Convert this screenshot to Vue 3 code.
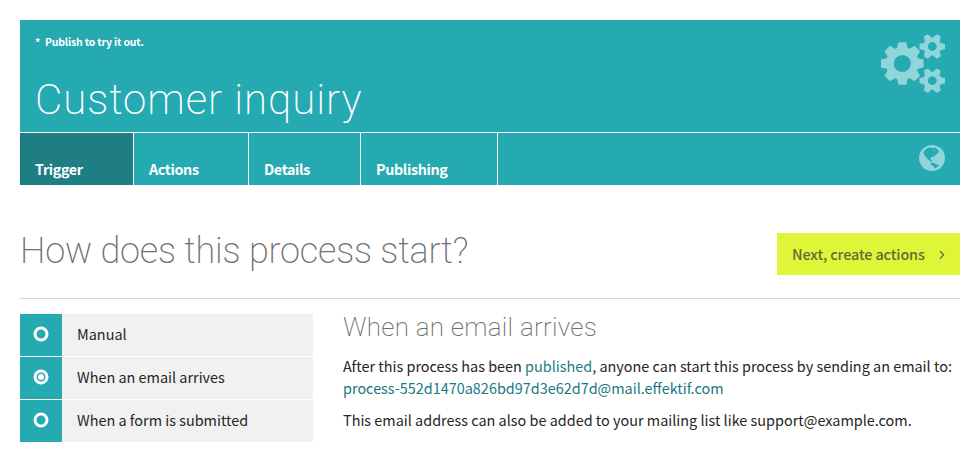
<script setup>
import { ref } from 'vue'

const tabs = [
  { label: 'Trigger', cls: 'trigger' },
  { label: 'Actions', cls: 'actions' },
  { label: 'Details', cls: 'details' },
  { label: 'Publishing', cls: 'publishing' },
]
const activeTab = ref('Trigger')
const options = ['Manual', 'When an email arrives', 'When a form is submitted']
const selected = ref('When an email arrives')

// Outline of a gear with evenly spaced, slightly tapered teeth and a round hole.
function gear(cx, cy, outer, body, hole, teeth, tip, base, start) {
  const points = []
  for (let i = 0; i < teeth; i++) {
    const a = start + (i * 2 * Math.PI) / teeth
    const corners = [[body, -base], [outer, -tip], [outer, tip], [body, base]]
    for (const [r, w] of corners) {
      const x = cx + r * Math.cos(a) - w * Math.sin(a)
      const y = cy + r * Math.sin(a) + w * Math.cos(a)
      points.push(`${x.toFixed(2)} ${y.toFixed(2)}`)
    }
  }
  return `M${points.join('L')}Z M${cx - hole} ${cy}a${hole} ${hole} 0 1 0 ${2 * hole} 0a${hole} ${hole} 0 1 0 ${-2 * hole} 0Z`
}
const gears = [
  gear(21.3, 29.5, 21.3, 15.6, 8.6, 8, 3.9, 5.3, 0),
  gear(51.3, 12.5, 12.8, 8.3, 4.4, 6, 2.4, 3.7, 0),
  gear(51.3, 46.7, 12.8, 8.3, 4.4, 6, 2.4, 3.7, 0),
]
</script>

<template>
  <main class="page">
    <header class="banner">
      <div class="intro">
        <div>
          <p class="note"><span class="star">*</span>Publish to try it out.</p>
          <h1><span>Customer inquiry</span></h1>
        </div>
        <svg class="gears" width="64" height="60" viewBox="0 0 64 60">
          <path v-for="d in gears" :key="d" :d="d" fill-rule="evenodd" />
        </svg>
      </div>
      <nav class="tabs">
        <a v-for="t in tabs" :key="t.label" class="tab" :class="[t.cls, { active: t.label === activeTab }]" @click="activeTab = t.label"><span>{{ t.label }}</span></a>
        <svg class="globe" width="26" height="26" viewBox="0 0 26 26">
          <circle class="sea" cx="13" cy="13" r="13" />
          <path class="land" d="M4 7.2 6 5.2 8 3.4 10.6 2.6 13.6 3 16.6 2.6 18 4 19.6 5.2 20 7.2 18.2 8 17.4 9.6 15.6 10.4 14.4 11.8 12.4 12 11.4 13.2 11.6 14.4 12.6 15 13 16.6 11.6 16.4 9 14.4 7.2 12 5.4 10.4 5.2 8.4Z" />
          <path class="sea" d="M13.6 5 15.6 4.8 15.2 6.4Z" />
          <path class="land" d="M11.6 18.2 14 17.6 16.2 18.4 17.2 19.4 20 19.8 19.2 21.4 17.2 22.4 15.8 23.8 15.2 22.2 13.6 20.4 11.8 19.6Z" />
        </svg>
      </nav>
    </header>

    <section class="question">
      <h2><span>How does this process start?</span></h2>
      <button class="next">
        <span>Next, create actions</span>
        <svg width="6" height="9" viewBox="0 0 6 9"><path d="M1 1 4.6 4.8 1 8.6" /></svg>
      </button>
    </section>

    <section class="content">
      <ul class="options">
        <li v-for="o in options" :key="o" @click="selected = o">
          <span class="radio">
            <svg width="16" height="16" viewBox="0 0 16 16">
              <circle class="ring" cx="8" cy="8" r="6" />
              <circle v-if="o === selected" class="dot" cx="8" cy="8" r="3" />
            </svg>
          </span>
          <span class="label">{{ o }}</span>
        </li>
      </ul>
      <article class="detail">
        <h3><span>When an email arrives</span></h3>
        <p>After this process has been <a>published</a>, anyone can start this process by sending an email to:<br><a class="address">process-552d1470a826bd97d3e62d7d@mail.effektif.com</a></p>
        <p>This email address can also be added to your mailing list like support@example.com.</p>
      </article>
    </section>
  </main>
</template>

<style>
body {
  background: #fff;
}
</style>

<style scoped>
.page {
  box-sizing: border-box;
  width: 980px;
  height: 462px;
  padding: 20px 20px 0;
  overflow: hidden;
  color: #262626;
  font-family: "Noto Sans CJK SC", "Noto Sans", sans-serif;
  font-size: 14.43px;
}
h1, h2, h3, p, ul {
  margin: 0;
  padding: 0;
  font-weight: 400;
}
h1, h2, h3 {
  font-family: "Roboto Slab", Roboto, sans-serif;
  font-weight: 200;
  white-space: nowrap;
}
.banner {
  background: #26aab1;
  color: #fff;
}
.intro {
  display: flex;
  justify-content: space-between;
  box-sizing: border-box;
  height: 113px;
  padding: 14px 15px 0;
  border-bottom: 1px solid #fff;
}
.note {
  font-size: 10.5px;
  font-weight: 700;
  letter-spacing: -0.2px;
  line-height: 16px;
}
.star {
  display: inline-block;
  width: 10px;
}
h1 {
  padding-top: 24px;
  font-size: 42px;
  letter-spacing: 0.95px;
  line-height: 52px;
}
.gears {
  fill: #8fd5d9;
}
.tabs {
  display: flex;
  height: 52px;
}
.tab {
  box-sizing: border-box;
  padding: 24px 0 0 15px;
  border-right: 1px solid #fff;
  font-size: 14.3px;
  font-weight: 700;
  letter-spacing: -0.35px;
  line-height: 24px;
}
.tab.active {
  background: #1e7e83;
}
.trigger { width: 114px; }
.actions { width: 115px; }
.details { width: 112px; }
.publishing { width: 137px; }
.globe {
  margin: 12px 15px 0 auto;
}
.sea { fill: #8fd5d9; }
.land { fill: #26aab1; }
.question {
  display: flex;
  align-items: flex-start;
  justify-content: space-between;
  box-sizing: border-box;
  height: 114px;
  padding-top: 48px;
  border-bottom: 1px solid #d6d6d6;
}
h2 {
  color: #707070;
  font-size: 36px;
  letter-spacing: -0.19px;
  line-height: 36px;
}
.next {
  display: flex;
  align-items: center;
  justify-content: space-between;
  box-sizing: border-box;
  width: 183px;
  height: 42px;
  padding: 0 15px;
  border: 0;
  background: #dff538;
  color: #626b38;
  font: 500 14.42px/24px "Noto Sans CJK SC", sans-serif;
  letter-spacing: -0.12px;
}
.next path {
  fill: none;
  stroke: #626b38;
  stroke-width: 1.3;
}
.content {
  display: flex;
  gap: 30px;
  padding-top: 15px;
}
.options {
  display: flex;
  flex: none;
  flex-direction: column;
  gap: 1px;
  width: 293px;
  list-style: none;
}
.options li {
  display: flex;
  height: 42px;
  background: #f1f1f1;
  line-height: 40px;
}
.radio {
  display: flex;
  align-items: center;
  justify-content: center;
  box-sizing: border-box;
  width: 42px;
  padding-bottom: 2px;
  background: #26aab1;
}
.ring {
  fill: none;
  stroke: #fff;
  stroke-width: 3;
}
.dot { fill: #fff; }
.label {
  padding-left: 15px;
}
.detail {
  white-space: nowrap;
}
h3 {
  color: #707070;
  font-size: 26px;
  letter-spacing: 0.25px;
  line-height: 26px;
  margin-bottom: 15px;
}
.detail p {
  line-height: 22px;
  margin-bottom: 10px;
}
.detail a {
  color: #1e7e83;
}
.detail .address {
  color: #1a797f;
}
</style>
